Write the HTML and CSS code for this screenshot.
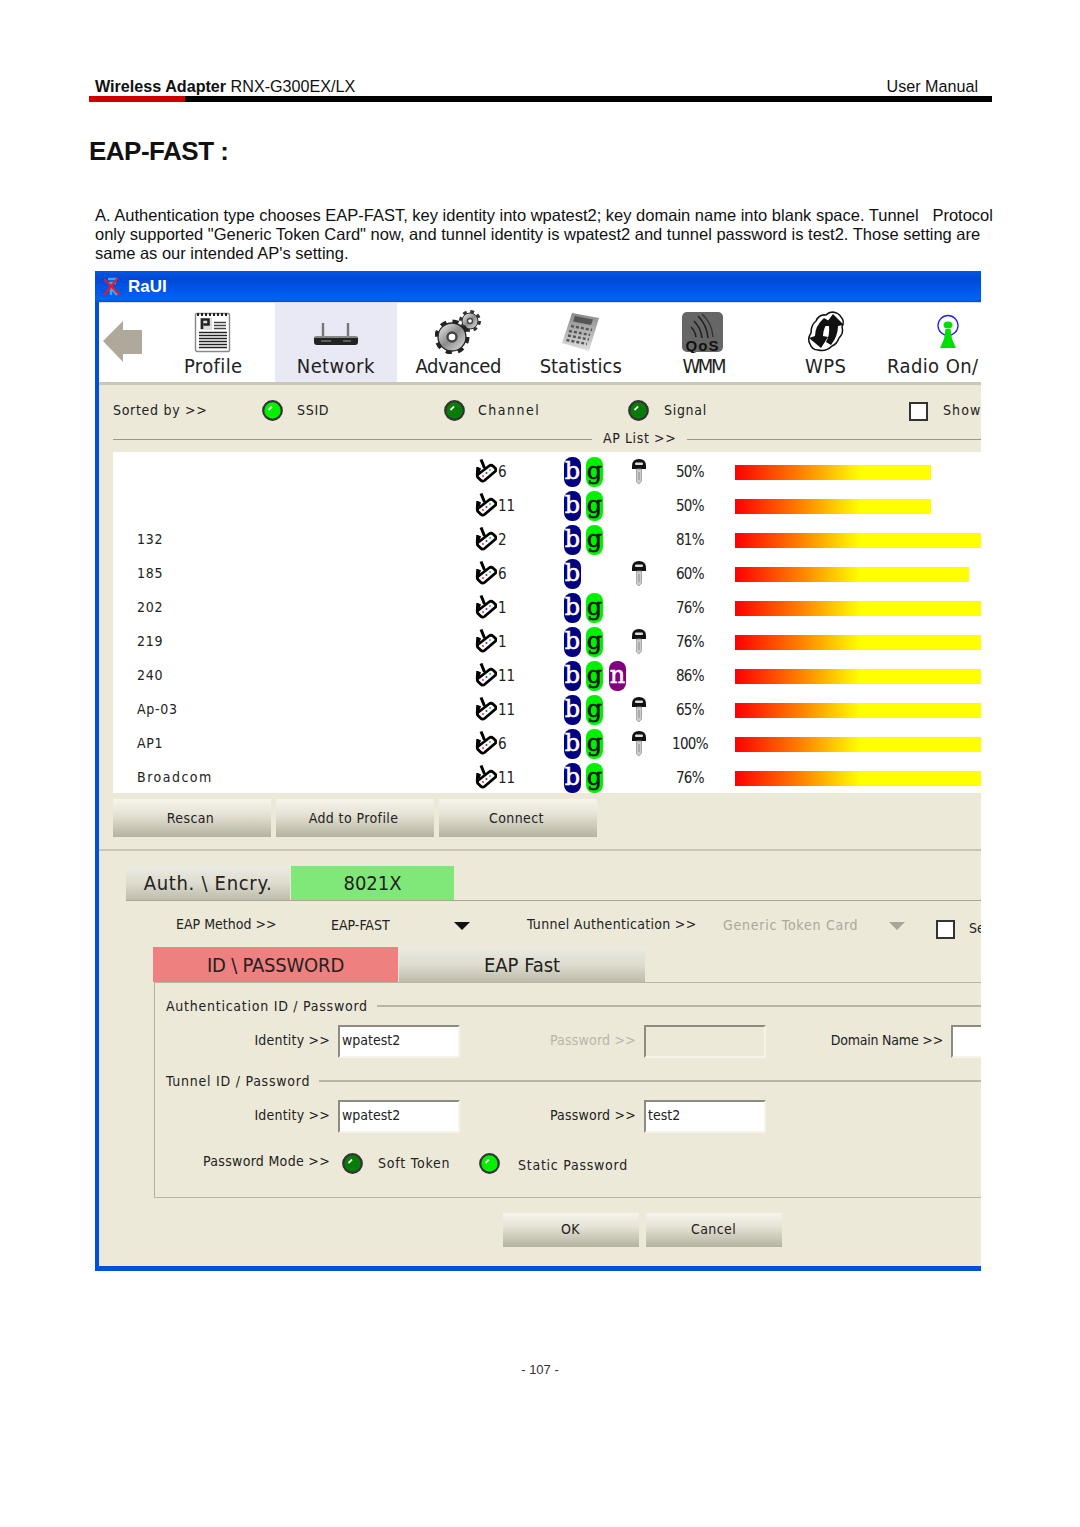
FILE: index.html
```html
<!DOCTYPE html>
<html lang="en">
<head>
<meta charset="utf-8">
<title>EAP-FAST</title>
<link rel="stylesheet" href="styles.css">
</head>
<body>
<svg class="defs" aria-hidden="true">
  <symbol id="ch" viewBox="0 0 22 24">
    <path d="M6 0.500 L9.500 9" stroke="#000" stroke-width="3" fill="none"/>
    <path d="M2 16 L2.500 8 M2 16 L5 9" stroke="#000" stroke-width="2.400" fill="none"/>
    <path d="M3 15.500 L14 7 Q16 5.500 18 7 L20.500 9.500 Q21.500 11 20 12.500 L9.500 21.500 Q7.500 23 5.500 21 L3 18.500 Q1.600 17 3 15.500Z" fill="#fff" stroke="#000" stroke-width="2.800"/>
    <circle cx="8" cy="17" r="1" fill="#e33"/><circle cx="11.500" cy="14" r="1" fill="#33e"/><circle cx="15" cy="11" r="1" fill="#3c3"/>
  </symbol>
  <symbol id="key" viewBox="0 0 16 26">
    <path d="M1 8 Q1 1 8 1 Q15 1 15 8 L15 11 L1 11Z" fill="#111"/>
    <rect x="4" y="4.500" width="8" height="2.500" rx="1" fill="#ddd"/>
    <path d="M5.500 11 H10.500 V23 L8 26 L5.500 24Z" fill="#ccc" stroke="#999" stroke-width=".8"/>
    <path d="M8 14 V22" stroke="#888" stroke-width="1"/>
  </symbol>
  <symbol id="dot" viewBox="0 0 21 21">
    <circle cx="10.500" cy="10.500" r="9.300" fill="currentColor" stroke="#333" stroke-width="2.200"/>
    <path d="M6.500 10 L10 6.500" stroke="#fff" stroke-width="1.800"/>
  </symbol>
</svg>

<div class="page">
  <header class="doc-head">
    <div class="doc-head-text">
      <span><b>Wireless Adapter</b> RNX-G300EX/LX</span>
      <span>User Manual</span>
    </div>
    <div class="doc-rule"><div class="doc-rule-red"></div></div>
  </header>

  <h1 class="doc-title">EAP-FAST :</h1>

  <p class="doc-text">A. Authentication type chooses EAP-FAST, key identity into wpatest2; key domain name into blank space. Tunnel &nbsp;&nbsp;Protocol<br>only supported "Generic Token Card" now, and tunnel identity is wpatest2 and tunnel password is test2. Those setting are<br>same as our intended AP's setting.</p>

  <section class="win">
    <div class="titlebar">
      <svg class="app-logo" viewBox="0 0 20 20" width="20" height="20">
        <path d="M6 2 H15 M7 6 H14 M9 6 V18 M9 11 L15 18" stroke="#3fa8e8" stroke-width="2.400" fill="none"/>
        <path d="M2 2 L18 18 M16 1 L2 18" stroke="#e8182a" stroke-width="2.200" fill="none"/>
      </svg>
      <span>RaUI</span>
    </div>

    <nav class="toolbar">
      <div class="tool-back">
        <svg viewBox="0 0 40 42" width="40" height="42"><polygon points="0,20 20,0 20,9 39,9 39,33 20,33 20,41" fill="#aea99a"/></svg>
      </div>
      <div class="tool">
        <div class="tool-icon">
          <svg viewBox="0 0 38 42" width="38" height="42">
            <rect x="1.500" y="2.500" width="34" height="38" rx="1.500" fill="#fff" stroke="#888" stroke-width="1.400"/>
            <path d="M3 3.500 H35" stroke="#222" stroke-width="3" stroke-dasharray="2 2"/>
            <path d="M6 7 H18 V19 H6Z" fill="#ddd"/>
            <path d="M8 18 V8.500 H14.500 V13.500 H9.500" fill="none" stroke="#222" stroke-width="2.600"/>
            <path d="M20 11.500 H32 M20 14.500 H32 M20 17.500 H32" stroke="#444" stroke-width="1.600"/>
            <path d="M5 21.500 H33 M5 24.500 H33 M5 27.500 H33 M5 30.500 H33 M5 33.500 H33 M5 36.500 H33" stroke="#222" stroke-width="1.700"/>
          </svg>
        </div>
        <span class="tool-label tl-wide">Profile</span>
      </div>
      <div class="tool tool-on">
        <div class="tool-icon">
          <svg viewBox="0 0 46 26" width="46" height="26" class="ico-router">
            <path d="M10 1 V15 M35 1 V15" stroke="#777" stroke-width="2.400"/>
            <rect x="1" y="14" width="44" height="9" rx="3" fill="#222"/>
            <path d="M2 15 H44" stroke="#aaa" stroke-width="1.400"/>
            <path d="M8 19 H18 M30 19 H38" stroke="#999" stroke-width="1"/>
          </svg>
        </div>
        <span class="tool-label tl-wide">Network</span>
      </div>
      <div class="tool">
        <div class="tool-icon">
          <svg viewBox="0 0 46 44" width="46" height="44">
            <defs>
              <linearGradient id="gear" x1="0" y1="0" x2="1" y2="1"><stop offset="0" stop-color="#f2f2f2"/><stop offset=".5" stop-color="#8c8c8c"/><stop offset="1" stop-color="#e4e4e4"/></linearGradient>
            </defs>
            <circle cx="35" cy="11" r="9" fill="none" stroke="#333" stroke-width="4" stroke-dasharray="3.600 3.470"/>
            <circle cx="35" cy="11" r="8" fill="url(#gear)" stroke="#333" stroke-width="1"/>
            <circle cx="35" cy="11" r="2.500" fill="#fff" stroke="#444" stroke-width="1.400"/>
            <circle cx="17" cy="27" r="15" fill="none" stroke="#222" stroke-width="5" stroke-dasharray="5.900 5.880"/>
            <circle cx="17" cy="27" r="14" fill="url(#gear)" stroke="#222" stroke-width="1.300"/>
            <circle cx="17" cy="27" r="4.500" fill="#fff" stroke="#444" stroke-width="2.400"/>
          </svg>
        </div>
        <span class="tool-label tl-tight">Advanced</span>
      </div>
      <div class="tool">
        <div class="tool-icon">
          <svg viewBox="0 0 40 42" width="40" height="42">
            <defs>
              <linearGradient id="calc" x1="0" y1="0" x2="0" y2="1"><stop offset="0" stop-color="#888"/><stop offset="1" stop-color="#e0e0e0"/></linearGradient>
            </defs>
            <polygon points="11,2 38,7 28,40 1,32" fill="url(#calc)"/>
            <polygon points="14,5 32,8.500 30,14 12,10.500" fill="#555"/>
            <path d="M10 15 L31 19 M8 20 L29 24 M7 24.500 L28 28.500 M5.500 29 L26 33" stroke="#555" stroke-width="2.400" stroke-dasharray="3 2"/>
          </svg>
        </div>
        <span class="tool-label">Statistics</span>
      </div>
      <div class="tool">
        <div class="tool-icon">
          <svg viewBox="0 0 42 41" width="42" height="41">
            <rect x="0" y="0" width="41" height="40" rx="5" fill="#666"/>
            <path d="M14 25 Q13 19 9 15 M20 26 Q19 16 12 9 M26 26 Q25 13 16 4" fill="none" stroke="#222" stroke-width="1.600"/>
            <path d="M31 25 Q30 11 20 2" fill="none" stroke="#333" stroke-width="1.400"/>
            <text x="20.500" y="38.500" text-anchor="middle" class="qos">QoS</text>
          </svg>
        </div>
        <span class="tool-label tool-label-tight">WMM</span>
      </div>
      <div class="tool">
        <div class="tool-icon">
          <svg viewBox="0 0 40 42" width="40" height="42">
            <path d="M27 1 Q33 2 35 6 Q39 10 36 16 Q38 22 33 27 Q31 33 26 35 Q20 41 12 39 Q6 39 4 33 Q1 28 5 22 Q5 14 10 10 Q13 3 20 4 Q23 1 27 1Z" fill="#fff" stroke="#111" stroke-width="1.500"/>
            <path d="M15 37 L3 27 L9 25 Q9 15 18 7 L23 10 Q17 17 17 25 L22 26Z" fill="#111"/>
            <path d="M27 3 L38 14 L32 15 Q32 25 25 34 L20 31 Q24 24 23 15 L18 15Z" fill="#111"/>
          </svg>
        </div>
        <span class="tool-label tl-wide">WPS</span>
      </div>
      <div class="tool">
        <div class="tool-icon">
          <svg viewBox="0 0 24 36" width="24" height="36">
            <ellipse cx="12" cy="11.500" rx="10" ry="10" fill="none" stroke="#2222ee" stroke-width="1.300"/>
            <ellipse cx="12" cy="11" rx="4.500" ry="3.500" fill="#00e000"/>
            <polygon points="9.500,15 14.500,15 16,25 20,34 4,34 8,25" fill="#00e000"/>
          </svg>
        </div>
        <span class="tool-label tl-wide">Radio On/</span>
      </div>
    </nav>

    <div class="body">
      <div class="sort">
        <span class="sort-title">Sorted by &gt;&gt;</span>
        <span class="opt opt-ssid"><svg class="dot on"><use href="#dot"/></svg>SSID</span>
        <span class="opt opt-ch"><svg class="dot off"><use href="#dot"/></svg><span class="opt-ch-text">Channel</span></span>
        <span class="opt opt-sig"><svg class="dot off"><use href="#dot"/></svg>Signal</span>
        <span class="opt opt-show"><span class="check check-show"></span>Show</span>
      </div>

      <div class="divider">
        <span class="divider-line divider-a"></span>
        <span class="divider-text">AP List &gt;&gt;</span>
        <span class="divider-line"></span>
      </div>

      <div class="list">
        <div class="row"><span></span><span class="ch"><svg class="ch-ico"><use href="#ch"/></svg>6</span><span class="bd b">b</span><span class="bd g">g</span><span></span><svg class="key"><use href="#key"/></svg><span class="pct">50%</span><span></span><span class="bar-wrap"><span class="bar" style="width:196px"></span></span></div>
        <div class="row"><span></span><span class="ch"><svg class="ch-ico"><use href="#ch"/></svg>11</span><span class="bd b">b</span><span class="bd g">g</span><span></span><span></span><span class="pct">50%</span><span></span><span class="bar-wrap"><span class="bar" style="width:196px"></span></span></div>
        <div class="row"><span>132</span><span class="ch"><svg class="ch-ico"><use href="#ch"/></svg>2</span><span class="bd b">b</span><span class="bd g">g</span><span></span><span></span><span class="pct">81%</span><span></span><span class="bar-wrap"><span class="bar" style="width:318px"></span></span></div>
        <div class="row"><span>185</span><span class="ch"><svg class="ch-ico"><use href="#ch"/></svg>6</span><span class="bd b">b</span><span></span><span></span><svg class="key"><use href="#key"/></svg><span class="pct">60%</span><span></span><span class="bar-wrap"><span class="bar" style="width:234px"></span></span></div>
        <div class="row"><span>202</span><span class="ch"><svg class="ch-ico"><use href="#ch"/></svg>1</span><span class="bd b">b</span><span class="bd g">g</span><span></span><span></span><span class="pct">76%</span><span></span><span class="bar-wrap"><span class="bar" style="width:298px"></span></span></div>
        <div class="row"><span>219</span><span class="ch"><svg class="ch-ico"><use href="#ch"/></svg>1</span><span class="bd b">b</span><span class="bd g">g</span><span></span><svg class="key"><use href="#key"/></svg><span class="pct">76%</span><span></span><span class="bar-wrap"><span class="bar" style="width:298px"></span></span></div>
        <div class="row"><span>240</span><span class="ch"><svg class="ch-ico"><use href="#ch"/></svg>11</span><span class="bd b">b</span><span class="bd g">g</span><span class="bd n">n</span><span></span><span class="pct">86%</span><span></span><span class="bar-wrap"><span class="bar" style="width:337px"></span></span></div>
        <div class="row"><span>Ap-03</span><span class="ch"><svg class="ch-ico"><use href="#ch"/></svg>11</span><span class="bd b">b</span><span class="bd g">g</span><span></span><svg class="key"><use href="#key"/></svg><span class="pct">65%</span><span></span><span class="bar-wrap"><span class="bar" style="width:255px"></span></span></div>
        <div class="row"><span>AP1</span><span class="ch"><svg class="ch-ico"><use href="#ch"/></svg>6</span><span class="bd b">b</span><span class="bd g">g</span><span></span><svg class="key"><use href="#key"/></svg><span class="pct">100%</span><span></span><span class="bar-wrap"><span class="bar" style="width:392px"></span></span></div>
        <div class="row"><span class="ssid-wide">Broadcom</span><span class="ch"><svg class="ch-ico"><use href="#ch"/></svg>11</span><span class="bd b">b</span><span class="bd g">g</span><span></span><span></span><span class="pct">76%</span><span></span><span class="bar-wrap"><span class="bar" style="width:298px"></span></span></div>
      </div>

      <div class="actions">
        <span class="btn">Rescan</span>
        <span class="btn">Add to Profile</span>
        <span class="btn">Connect</span>
      </div>

      <div class="sep"></div>

      <div class="tabs-a">
        <span class="tab-a">Auth. \ Encry.</span>
        <span class="tab-a tab-green">8021X</span>
      </div>

      <div class="eap">
        <span class="eap-k">EAP Method &gt;&gt;</span>
        <span class="eap-v">EAP-FAST</span>
        <span class="tri"></span>
        <span class="eap-t">Tunnel Authentication &gt;&gt;</span>
        <span class="eap-g">Generic Token Card</span>
        <span class="tri tri-off"></span>
        <span class="check check-se"></span>
        <span class="eap-se">Se</span>
      </div>

      <div class="tabs-b">
        <span class="tab-b tab-red">ID \ PASSWORD</span>
        <span class="tab-b tab-fast">EAP Fast</span>
      </div>

      <div class="panel">
        <div class="legend"><span>Authentication ID / Password</span><span class="legend-line"></span></div>
        <div class="form">
          <span class="lbl lbl-first">Identity &gt;&gt;</span><span class="inp">wpatest2</span>
          <span class="lbl lbl-off">Password &gt;&gt;</span><span class="inp inp-off"></span>
          <span class="lbl lbl-domain">Domain Name &gt;&gt;</span><span class="inp"></span>
        </div>
        <div class="legend"><span>Tunnel ID / Password</span><span class="legend-line"></span></div>
        <div class="form">
          <span class="lbl lbl-first">Identity &gt;&gt;</span><span class="inp">wpatest2</span>
          <span class="lbl">Password &gt;&gt;</span><span class="inp">test2</span>
        </div>
        <div class="mode">
          <span class="lbl lbl-first">Password Mode &gt;&gt;</span>
          <svg class="dot off mode-dot"><use href="#dot"/></svg>
          <span class="mode-soft">Soft Token</span>
          <svg class="dot on"><use href="#dot"/></svg>
          <span class="mode-static">Static Password</span>
        </div>
      </div>

      <div class="final">
        <span class="btn btn-final">OK</span>
        <span class="btn btn-final">Cancel</span>
      </div>
    </div>
  </section>

  <footer class="doc-foot">- 107 -</footer>
</div>
</body>
</html>
```

FILE: styles.css
```css
* { box-sizing: border-box; }
html, body { margin: 0; padding: 0; background: #fff; }
body { font-family: "Liberation Sans", Arial, sans-serif; color: #111; }
.defs { position: absolute; width: 0; height: 0; }
.page { width: 1080px; height: 1527px; padding-top: 76px; overflow: hidden; }

.doc-head { margin-left: 89px; width: 903px; }
.doc-head-text { display: flex; justify-content: space-between; padding: 0 14px 0 6px; font-size: 16.15px; line-height: 20px; }
.doc-rule { height: 6px; background: #000; }
.doc-rule-red { width: 96px; height: 6px; background: #cc0000; }

.doc-title { margin: 32px 0 0 89px; font-size: 26px; line-height: 34px; font-weight: bold; letter-spacing: -.5px; color: #111; }

.doc-text { margin: 38px 0 0 95px; font-size: 16.5px; line-height: 19px; white-space: nowrap; color: #111; }

/* window */
.win { margin: 8px 0 0 95px; width: 886px; height: 1000px; background: #0050e0; padding: 0 0 5px 4px; overflow: hidden; font-family: "DejaVu Sans", sans-serif; font-stretch: condensed; font-size: 14px; color: #222; }
.titlebar { margin-left: -4px; height: 31px; display: flex; align-items: center; gap: 6px; padding-left: 7px; background: linear-gradient(180deg, #0058e6 0, #0049d6 25%, #0056e8 60%, #0062f5 90%, #0050dc 100%); color: #fff; font: bold 17px "Liberation Sans", sans-serif; }
.app-logo { flex: none; }

.toolbar { height: 83px; display: flex; background: #fff; border-bottom: 3px solid #c9c6ba; border-top: 1px solid #dcdcf0; overflow: hidden; }
.tool-back { width: 53px; flex: none; padding: 18px 0 0 4px; }
.tool { width: 122.5px; flex: none; display: flex; flex-direction: column; align-items: center; }
.tool-on { background: #e9e8f5; }
.tool-icon { height: 51px; display: flex; align-items: center; justify-content: center; padding-top: 7px; }
.ico-router { margin-top: 6px; }
.tool-label { font-size: 20px; line-height: 24px; color: #222; white-space: nowrap; }
.tool:last-child .tool-label { align-self: flex-start; }
.tl-wide { letter-spacing: .4px; }
.tl-tight { letter-spacing: -.4px; }
.tool-label-tight { letter-spacing: -2.5px; }
.qos { font: bold 15px "Liberation Sans", sans-serif; letter-spacing: 1px; fill: #111; }

.body { background: #ece9d8; height: 881px; overflow: hidden; }

.sort { height: 40px; margin-top: 5px; padding-left: 14px; display: flex; align-items: center; white-space: nowrap; letter-spacing: .7px; }
.sort-title { width: 149px; flex: none; }
.opt { display: flex; align-items: center; flex: none; gap: 14px; }
.opt-ssid { width: 182px; }
.opt-ch { width: 184px; gap: 13px; }
.opt-ch-text { letter-spacing: 1.5px; }
.opt-sig { width: 281px; gap: 15px; }
.opt-show { gap: 15px; letter-spacing: 1.1px; }
.dot { width: 21px; height: 21px; flex: none; }
.dot.on { color: #00f000; }
.dot.off { color: #087c08; }
.check { display: block; width: 19px; height: 19px; border: 2px solid #333; background: #fff; flex: none; }
.check-show { margin-top: 3px; }

.divider { height: 18px; margin-left: 14px; display: flex; align-items: center; gap: 11px; letter-spacing: .6px; white-space: nowrap; }
.divider-text { padding-bottom: 3px; }
.divider-line { flex: 1; height: 1px; background: #9a988c; }
.divider-a { flex: none; width: 479px; }

.list { margin: 4px 0 0 14px; height: 341px; padding-top: 3px; background: #fff; }
.row { height: 34px; display: grid; grid-template-columns: 363px 88px 22px 23px 22px 18px 82px 4px 246px; align-items: center; padding-left: 0; }
.row > span:first-child { padding: 0 0 2px 24px; letter-spacing: .7px; }
.row > .ssid-wide:first-child { letter-spacing: 1.5px; }
.ch { display: flex; align-items: center; gap: 1px; margin-left: -1px; font-size: 15px; }
.ch-ico { width: 22px; height: 24px; flex: none; margin-top: -3px; }
.bd { width: 17px; height: 30px; border-radius: 8px; display: flex; align-items: center; justify-content: center; font: normal 24px "DejaVu Serif", serif; padding-bottom: 3px; -webkit-text-stroke: .5px currentColor; }
.bd.b { background: #000080; color: #fff; }
.bd.g { background: #00f000; color: #111; }
.bd.n { background: #800080; color: #fff; }
.key { width: 16px; height: 26px; margin-top: -3px; }
.pct { text-align: center; font-size: 15px; letter-spacing: -.6px; }
.bar-wrap { display: block; overflow: hidden; height: 15px; }
.bar { display: block; height: 15px; background: linear-gradient(90deg, #ff0000 0, #ff8000 65px, #ffff00 125px); }

.actions { display: flex; gap: 5px; margin: 6px 0 0 14px; }
.btn { width: 158px; height: 38px; display: flex; align-items: center; justify-content: center; padding-right: 3px; background: linear-gradient(180deg, #f6f4ec 0, #e6e3d6 40%, #b4b2a0 100%); font-size: 14px; letter-spacing: .4px; }
.sep { height: 2px; margin-top: 12px; background: #c9c5b8; }

.tabs-a { display: flex; gap: 1px; margin: 15px 0 0 27px; border-bottom: 1px solid #a8a698; height: 35px; }
.tab-a { width: 164px; height: 34px; display: flex; align-items: center; justify-content: center; font-size: 20px; letter-spacing: .7px; background: linear-gradient(180deg, #ecebe2 0, #dedccf 50%, #bdbbab 100%); }
.tab-green { width: 163px; background: #80e878; letter-spacing: 0; }

.eap { height: 46px; display: flex; align-items: center; white-space: nowrap; padding-left: 77px; }
.eap-k { width: 155px; flex: none; }
.eap-v { width: 123px; flex: none; padding-top: 2px; }
.tri { width: 0; height: 0; flex: none; margin-top: 4px; border-left: 8px solid transparent; border-right: 8px solid transparent; border-top: 8px solid #111; }
.eap-t { margin-left: 57px; width: 196px; flex: none; letter-spacing: .3px; }
.eap-g { width: 166px; flex: none; color: #aaa89c; letter-spacing: .75px; padding-top: 2px; }
.tri-off { border-top-color: #a8a698; }
.check-se { margin: 10px 14px 0 31px; }
.eap-se { padding-top: 8px; }

.tabs-b { display: flex; gap: 1px; margin-left: 54px; height: 35px; }
.tab-b { width: 245px; display: flex; align-items: center; justify-content: center; font-size: 20px; background: linear-gradient(180deg, #ecebe2 0, #dedccf 50%, #bdbbab 100%); }
.tab-red { background: #ee8080; letter-spacing: -.2px; }
.tab-fast { width: 246px; }

.panel { margin-left: 55px; height: 216px; border: 1px solid #b8b5a8; border-left-color: #bfa8a4; border-right: 0; padding-left: 11px; overflow: hidden; }
.legend { height: 24px; margin-top: 11px; display: flex; align-items: center; gap: 9px; white-space: nowrap; letter-spacing: .75px; }
.legend-line { flex: 1; height: 2px; background: #b8b5a4; }
.form { height: 33px; margin-top: 7px; margin-left: -11px; display: flex; align-items: stretch; white-space: nowrap; }
.lbl { width: 184px; flex: none; display: flex; align-items: center; justify-content: flex-end; padding: 0 8px 4px 0; letter-spacing: .2px; }
.lbl-first { width: 183px; }
.lbl-off { color: #b8b6aa; }
.lbl-domain { width: 185px; letter-spacing: -.2px; }
.inp { width: 122px; flex: none; background: #fff; border: 2px solid #f6f4e8; border-top-color: #8e8c80; border-left-color: #8e8c80; display: flex; align-items: center; padding: 0 0 4px 2px; }
.inp-off { background: #ece9d8; }
.mode { height: 26px; margin: 17px 0 0 -11px; display: flex; align-items: center; white-space: nowrap; }
.mode .lbl-first { letter-spacing: .3px; }
.mode-dot { margin-left: 4px; }
.mode-soft { margin-left: 15px; width: 101px; flex: none; letter-spacing: .8px; }
.mode-static { margin-left: 18px; letter-spacing: .75px; padding-top: 3px; }

.final { display: flex; gap: 7px; margin: 15px 0 0 404px; }
.btn-final { width: 136px; height: 34px; padding: 0 1px 2px 0; }

.doc-foot { margin-top: 91px; text-align: center; font-size: 13px; line-height: 16px; color: #333; }
```
